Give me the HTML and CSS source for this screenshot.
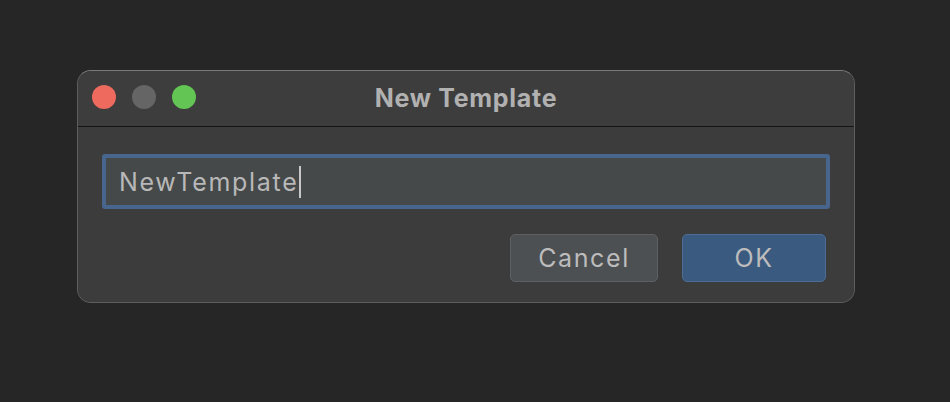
FILE: index.html
```html
<!DOCTYPE html>
<html>
<head>
<meta charset="utf-8">
<link rel="stylesheet" href="styles.css">
</head>
<body>
<div class="stage">
  <div class="window">
    <div class="titlebar">
      <div class="lights">
        <span class="light red"></span>
        <span class="light gray"></span>
        <span class="light green"></span>
      </div>
      <div class="title">New Template</div>
    </div>
    <div class="content">
      <div class="field"><span class="value">NewTemplate</span><span class="caret"></span></div>
      <div class="buttons">
        <button class="btn cancel">Cancel</button>
        <button class="btn ok">OK</button>
      </div>
    </div>
  </div>
</div>
</body>
</html>
```
FILE: styles.css
```css
html, body {
  margin: 0;
  padding: 0;
  background: #262626;
  width: 950px;
  height: 402px;
  overflow: hidden;
  font-family: Inter, "Liberation Sans", sans-serif;
}
.stage {
  padding: 70px 0 0 77px;
}
.window {
  width: 776px;
  height: 231px;
  background: #3c3c3c;
  border: 1px solid #5e5e5e;
  border-top-color: #7a7a7a;
  border-radius: 14px;
  overflow: hidden;
  display: flex;
  flex-direction: column;
}
.titlebar {
  height: 55px;
  background: #3d3d3d;
  border-bottom: 1px solid #141414;
  position: relative;
  display: flex;
  align-items: center;
  justify-content: center;
}
.lights {
  position: absolute;
  left: 14px;
  top: 14px;
  display: flex;
  gap: 16px;
}
.light {
  width: 24px;
  height: 24px;
  border-radius: 50%;
  display: block;
}
.red { background: #ee6a5f; }
.gray { background: #656565; }
.green { background: #62c554; }
.title {
  font-weight: 700;
  font-size: 25px;
  color: #b1b1b1;
  letter-spacing: 0.7px;
  margin-top: -1px;
}
.content {
  flex: 1;
  background: #3c3c3c;
  padding: 27px 24px 0 24px;
}
.field {
  box-sizing: border-box;
  width: 728px;
  height: 55px;
  border: 4px solid #48658d;
  border-radius: 3px;
  background: #45494a;
  display: flex;
  align-items: center;
  padding-left: 13px;
}
.value {
  font-size: 25px;
  color: #b8b8b8;
  letter-spacing: 1.7px;
}
.caret {
  width: 2px;
  height: 32px;
  background: #c8c8c8;
  margin-left: 1px;
}
.buttons {
  display: flex;
  justify-content: flex-end;
  gap: 24px;
  margin-top: 25px;
  padding-right: 4px;
}
.btn {
  height: 48px;
  border-radius: 5px;
  font-family: Inter, "Liberation Sans", sans-serif;
  font-size: 25px;
  letter-spacing: 1.6px;
  color: #bcbcbc;
  padding: 0;
}
.cancel {
  width: 148px;
  background: #4c5052;
  border: 1px solid #5d6062;
}
.ok {
  width: 144px;
  background: #3b5a7f;
  border: 1px solid #4b6d95;
}
```
